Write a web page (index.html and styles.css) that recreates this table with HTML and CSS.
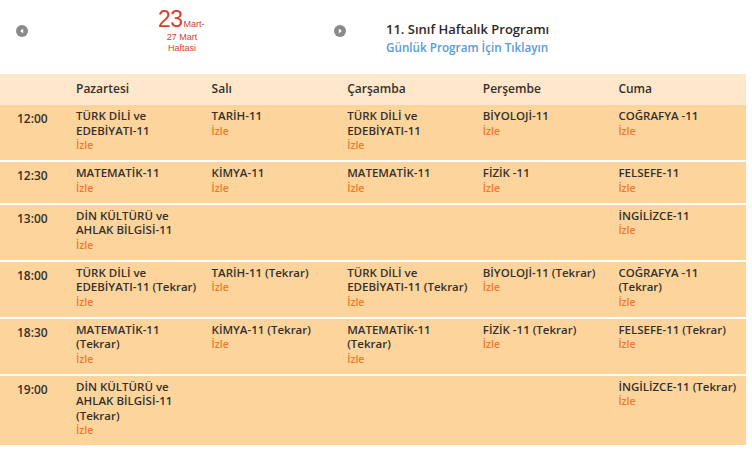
FILE: index.html
```html
<!DOCTYPE html>
<html lang="tr">
<head>
<meta charset="utf-8">
<title>11. Sınıf Haftalık Programı</title>
<link rel="stylesheet" href="styles.css">
</head>
<body>
<div class="page">
  <div class="top">
    <div class="nav">
      <a class="arrow arrow-left" href="#"><svg width="12" height="12" viewBox="0 0 12 12"><circle cx="6" cy="6" r="6" fill="#8a8a8a"/><path d="M7.2 3.6 L4.2 6 L7.2 8.4 Z" fill="#fff"/></svg></a>
      <div class="date">
        <div class="date-line"><span class="day">23</span><span class="mon">Mart-</span></div>
        <div class="date-sub">27 Mart</div>
        <div class="date-sub">Haftasi</div>
      </div>
      <a class="arrow arrow-right" href="#"><svg width="12" height="12" viewBox="0 0 12 12"><circle cx="6" cy="6" r="6" fill="#8a8a8a"/><path d="M4.8 3.6 L7.8 6 L4.8 8.4 Z" fill="#fff"/></svg></a>
    </div>
    <div class="title">
      <div class="title-main">11. Sınıf Haftalık Programı</div>
      <a class="title-link" href="#">Günlük Program İçin Tıklayın</a>
    </div>
  </div>
  <table class="schedule">
    <thead>
      <tr><th class="time"></th><th>Pazartesi</th><th>Salı</th><th>Çarşamba</th><th>Perşembe</th><th>Cuma</th></tr>
    </thead>
    <tbody>
      <tr>
        <td class="time">12:00</td>
        <td>TÜRK DİLİ ve EDEBİYATI-11<a class="izle" href="#">İzle</a></td>
        <td>TARİH-11<a class="izle" href="#">İzle</a></td>
        <td>TÜRK DİLİ ve EDEBİYATI-11<a class="izle" href="#">İzle</a></td>
        <td>BİYOLOJİ-11<a class="izle" href="#">İzle</a></td>
        <td>COĞRAFYA -11<a class="izle" href="#">İzle</a></td>
      </tr>
      <tr>
        <td class="time">12:30</td>
        <td>MATEMATİK-11<a class="izle" href="#">İzle</a></td>
        <td>KİMYA-11<a class="izle" href="#">İzle</a></td>
        <td>MATEMATİK-11<a class="izle" href="#">İzle</a></td>
        <td>FİZİK -11<a class="izle" href="#">İzle</a></td>
        <td>FELSEFE-11<a class="izle" href="#">İzle</a></td>
      </tr>
      <tr>
        <td class="time">13:00</td>
        <td>DİN KÜLTÜRÜ ve AHLAK BİLGİSİ-11<a class="izle" href="#">İzle</a></td>
        <td></td>
        <td></td>
        <td></td>
        <td>İNGİLİZCE-11<a class="izle" href="#">İzle</a></td>
      </tr>
      <tr>
        <td class="time">18:00</td>
        <td>TÜRK DİLİ ve EDEBİYATI-11 (Tekrar)<a class="izle" href="#">İzle</a></td>
        <td>TARİH-11 (Tekrar)<a class="izle" href="#">İzle</a></td>
        <td>TÜRK DİLİ ve EDEBİYATI-11 (Tekrar)<a class="izle" href="#">İzle</a></td>
        <td>BİYOLOJİ-11 (Tekrar)<a class="izle" href="#">İzle</a></td>
        <td>COĞRAFYA -11 (Tekrar)<a class="izle" href="#">İzle</a></td>
      </tr>
      <tr>
        <td class="time">18:30</td>
        <td>MATEMATİK-11 (Tekrar)<a class="izle" href="#">İzle</a></td>
        <td>KİMYA-11 (Tekrar)<a class="izle" href="#">İzle</a></td>
        <td>MATEMATİK-11 (Tekrar)<a class="izle" href="#">İzle</a></td>
        <td>FİZİK -11 (Tekrar)<a class="izle" href="#">İzle</a></td>
        <td>FELSEFE-11 (Tekrar)<a class="izle" href="#">İzle</a></td>
      </tr>
      <tr>
        <td class="time">19:00</td>
        <td>DİN KÜLTÜRÜ ve AHLAK BİLGİSİ-11 (Tekrar)<a class="izle" href="#">İzle</a></td>
        <td></td>
        <td></td>
        <td></td>
        <td>İNGİLİZCE-11 (Tekrar)<a class="izle" href="#">İzle</a></td>
      </tr>
    </tbody>
  </table>
</div>
</body>
</html>
```
FILE: styles.css
```css
html, body {
  margin: 0;
  padding: 0;
  background: #fff;
}
body {
  font-family: "Open Sans", "Liberation Sans", sans-serif;
  color: #35302d;
}
.page {
  width: 746px;
}
.top {
  display: flex;
  align-items: flex-start;
  height: 74px;
}
.nav {
  width: 386px;
  display: flex;
  align-items: flex-start;
}
.arrow {
  display: block;
  line-height: 0;
  margin-top: 25px;
}
.arrow-left {
  margin-left: 16px;
}
.arrow-right {
  margin-left: 128px;
}
.date {
  margin-left: 130px;
  width: 48px;
  text-align: center;
  color: #d43f2e;
  padding-top: 6px;
  font-family: "Liberation Sans", sans-serif;
}
.date-line {
  display: flex;
  align-items: baseline;
  white-space: nowrap;
  height: 26px;
}
.day {
  font-size: 23px;
  line-height: 26px;
  letter-spacing: -0.5px;
}
.mon {
  font-size: 9px;
  line-height: 11px;
  margin-left: 1px;
}
.date-sub {
  font-size: 9px;
  line-height: 10.5px;
}
.title {
  padding-top: 20px;
}
.title-main {
  font-size: 13px;
  line-height: 18px;
  font-weight: 600;
  color: #2e2a28;
}
.title-link {
  display: block;
  font-size: 11.7px;
  line-height: 19px;
  font-weight: 600;
  color: #5a9bd8;
  text-decoration: none;
}
.schedule {
  width: 746px;
  border-collapse: collapse;
  table-layout: fixed;
}
.schedule th,
.schedule td {
  text-align: left;
  vertical-align: top;
  font-size: 11.5px;
  font-weight: 600;
  line-height: 14.5px;
  padding: 4px 2px 7px 8px;
}
.schedule th.time,
.schedule td.time {
  width: 43px;
  padding-left: 17px;
  padding-right: 8px;
}
.schedule thead th {
  background: #fee7ca;
  height: 31px;
  padding-top: 0;
  padding-bottom: 0;
  vertical-align: middle;
  font-size: 12px;
}
.schedule tbody td {
  background: #fdd59c;
}
.schedule tbody tr + tr td {
  border-top: 2px solid #fff;
}
.schedule td.time {
  padding-top: 7px;
  font-size: 12px;
}
.izle {
  display: block;
  font-size: 10.5px;
  line-height: 15px;
  color: #f1782c;
  text-decoration: none;
}
```
